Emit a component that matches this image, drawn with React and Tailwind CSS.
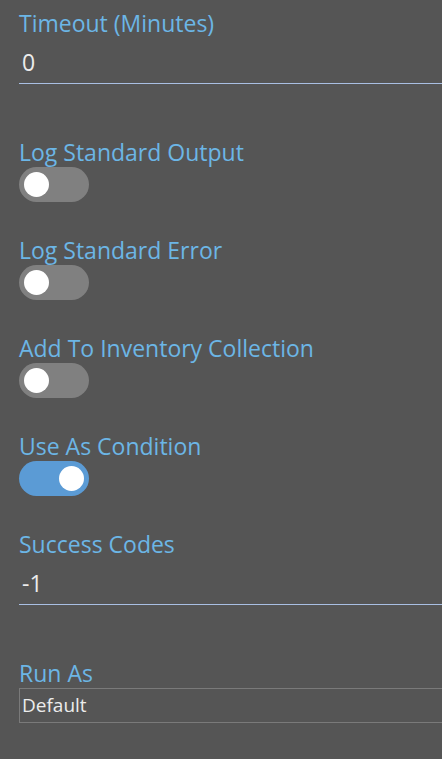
import React from "react";

function Toggle({ on }) {
    return (
        <div className={`flex h-[35px] w-[70px] items-center rounded-full px-[5px] ${on ? "justify-end bg-[#5b9bd5]" : "justify-start bg-[#808080]"}`}>
            <span className="h-[25px] w-[25px] rounded-full bg-white" />
        </div>
    );
}

function Label({ children }) {
    return <div className="text-[23px] leading-[30px] text-[#6cb6e6]">{children}</div>;
}

function ToggleField({ label, on }) {
    return (
        <div className="h-[98px]">
            <Label>{label}</Label>
            <Toggle on={on} />
        </div>
    );
}

function TextField({ label, value }) {
    return (
        <div>
            <Label>{label}</Label>
            <div className="mt-[9px] border-b border-[#a9bfe3] pb-[6px] pl-[3px] text-[23px] leading-[30px] text-[#ececec]">{value}</div>
        </div>
    );
}

export default function App() {
    const toggles = [
        { label: "Log Standard Output", on: false },
        { label: "Log Standard Error", on: false },
        { label: "Add To Inventory Collection", on: false },
        { label: "Use As Condition", on: true },
    ];
    return (
        <div className="h-[759px] overflow-hidden bg-[#555555] pl-[19px] font-['Open_Sans',sans-serif]">
            <div className="w-[440px] pt-[8px]">
                <TextField label="Timeout (Minutes)" value="0" />
                <div className="mt-[53px]">
                    {toggles.map((t) => (
                        <ToggleField key={t.label} label={t.label} on={t.on} />
                    ))}
                </div>
                <TextField label="Success Codes" value="-1" />
                <div className="mt-[53px]">
                    <Label>Run As</Label>
                    <div className="flex h-[35px] items-center border border-[#7a7a7a] pl-[2px] text-[19px] text-[#ececec]">Default</div>
                </div>
            </div>
        </div>
    );
}
